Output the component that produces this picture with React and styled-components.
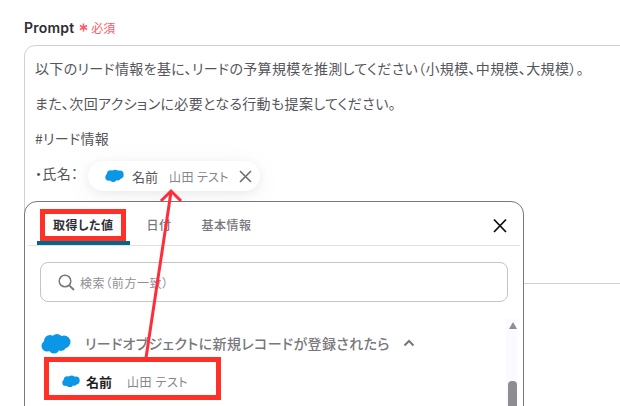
import styled, { createGlobalStyle } from 'styled-components';

const GlobalStyle = createGlobalStyle`
  html, body {
    margin: 0;
    padding: 0;
    background: #fff;
    overflow: hidden;
  }
  body {
    font-family: "Noto Sans CJK JP", "Noto Sans", sans-serif;
    font-feature-settings: "palt";
  }
`;

const Page = styled.div`
  position: relative;
  width: 620px;
  height: 406px;
  overflow: hidden;
  box-sizing: border-box;
  padding: 18px 0 0 24px;
`;

const LabelRow = styled.div`
  display: flex;
  align-items: center;
  height: 18px;
  margin-bottom: 9px;
`;

const Label = styled.span`
  font-family: Inter, "Noto Sans", sans-serif;
  font-size: 14px;
  font-weight: 600;
  color: #2d2d33;
  letter-spacing: 0.2px;
`;

const Asterisk = styled.svg`
  margin-left: 5px;
  width: 9px;
  height: 9px;
`;

const Required = styled.span`
  margin-left: 3px;
  font-size: 12px;
  color: #ff5a66;
`;

const PromptBox = styled.div`
  box-sizing: border-box;
  width: 640px;
  height: 239px;
  padding: 5px 10px;
  border: 1px solid #cfd0dc;
  border-radius: 11px;
  font-size: 14px;
  letter-spacing: 0.35px;
  color: #55555c;
`;

const PromptLine = styled.div`
  height: 35px;
  line-height: 35px;
  white-space: nowrap;
`;

const Chip = styled.div`
  position: absolute;
  left: 88px;
  top: 161px;
  width: 172px;
  height: 30px;
  box-sizing: border-box;
  padding-left: 17px;
  display: flex;
  align-items: center;
  border-radius: 15px;
  background: #fff;
  box-shadow: 0 2px 8px rgba(60, 60, 80, 0.08), 0 6px 30px rgba(60, 60, 80, 0.05);
`;

const ChipName = styled.span`
  margin-left: 8px;
  font-size: 13px;
  color: #55555c;
`;

const ChipValue = styled.span`
  margin-left: 11px;
  font-size: 12px;
  color: #85858c;
  letter-spacing: 0.4px;
`;

const ChipClose = styled.svg`
  margin-left: 10px;
  width: 13px;
  height: 13px;
`;

const Panel = styled.div`
  position: absolute;
  left: 24px;
  top: 201px;
  width: 500px;
  height: 240px;
  box-sizing: border-box;
  border: 1px solid #77777c;
  border-radius: 13px;
  background: #fff;
  padding: 0 3px;
`;

const TabBar = styled.div`
  display: flex;
  align-items: flex-end;
  height: 43px;
  border-bottom: 1px solid #e2e2e4;
  position: relative;
`;

const Tab = styled.div`
  box-sizing: border-box;
  height: 43px;
  line-height: 46px;
  padding: 0 ${({ $pad }) => $pad}px;
  font-size: 12px;
  font-weight: ${({ $active }) => ($active ? 700 : 500)};
  letter-spacing: 0.5px;
  color: ${({ $active }) => ($active ? '#2d2d33' : '#77777c')};
  border-bottom: 4px solid ${({ $active }) => ($active ? '#00688f' : 'transparent')};
  border-radius: 4px 4px 0 0;
  margin-left: ${({ $left }) => $left}px;
`;

const CloseIcon = styled.svg`
  position: absolute;
  right: 12px;
  top: 16px;
  width: 16px;
  height: 16px;
`;

const SearchBox = styled.div`
  box-sizing: border-box;
  margin: 16px 12px 0 12px;
  height: 40px;
  display: flex;
  align-items: center;
  padding-left: 17px;
  border: 1px solid #c4c4c8;
  border-radius: 8px;
`;

const SearchText = styled.span`
  margin-left: 5px;
  font-size: 12px;
  color: #8e8e94;
  letter-spacing: 0.6px;
`;

const ListArea = styled.div`
  position: relative;
  display: flex;
  margin-top: 17px;
  height: 120px;
`;

const List = styled.div`
  flex: 1;
  padding: 12px 0 0 13px;
`;

const GroupRow = styled.div`
  display: flex;
  align-items: center;
  height: 24px;
`;

const GroupTitle = styled.span`
  margin-left: 14px;
  font-size: 14px;
  font-weight: 500;
  letter-spacing: 0.4px;
  color: #77777c;
`;

const Chevron = styled.svg`
  margin-left: 13px;
  width: 12px;
  height: 8px;
`;

const ItemRow = styled.div`
  display: flex;
  align-items: center;
  height: 24px;
  margin: 14px 0 0 21px;
`;

const ItemName = styled.span`
  margin-left: 6px;
  font-size: 13px;
  font-weight: 700;
  color: #1e1e22;
`;

const ItemValue = styled.span`
  margin-left: 15px;
  font-size: 12px;
  color: #85858c;
  letter-spacing: 0.6px;
`;

const ScrollTrack = styled.div`
  width: 11px;
  margin-right: 3px;
  background: #fcfaff;
  display: flex;
  flex-direction: column;
  align-items: flex-end;
`;

const ScrollUp = styled.div`
  margin-top: 3px;
  width: 0;
  height: 0;
  border-left: 4.5px solid transparent;
  border-right: 4.5px solid transparent;
  border-bottom: 7px solid #8f8d92;
`;

const ScrollThumb = styled.div`
  margin-top: 52px;
  width: 9px;
  height: 60px;
  border-radius: 4px;
  background: #8f8d92;
`;

const Highlight = styled.div`
  position: absolute;
  left: ${({ $x }) => $x}px;
  top: ${({ $y }) => $y}px;
  width: ${({ $w }) => $w}px;
  height: ${({ $h }) => $h}px;
  box-sizing: border-box;
  border: 5px solid #ff3126;
`;

const ArrowLayer = styled.svg`
  position: absolute;
  left: 0;
  top: 0;
  width: 620px;
  height: 406px;
  pointer-events: none;
`;

function Cloud({ width }) {
  return (
    <svg width={width} viewBox="0 0 30 21" style={{ flexShrink: 0 }}>
      <g fill="#0b97e6">
        <circle cx="9" cy="8" r="6" />
        <circle cx="16" cy="6.5" r="5.5" />
        <circle cx="23" cy="9" r="6.5" />
        <circle cx="6" cy="13" r="5.5" />
        <circle cx="13" cy="15" r="5.5" />
        <circle cx="20" cy="13" r="5" />
      </g>
    </svg>
  );
}

export default function App() {
  return (
    <>
      <GlobalStyle />
      <Page>
        <LabelRow>
          <Label>Prompt</Label>
          <Asterisk viewBox="0 0 9 9">
            <path d="M4.500 0.500V8.500M1 2.500L8 6.500M8 2.500L1 6.500" stroke="#ff5a66" strokeWidth="1.500" fill="none" />
          </Asterisk>
          <Required>必須</Required>
        </LabelRow>
        <PromptBox>
          <PromptLine>以下のリード情報を基に、リードの予算規模を推測してください（小規模、中規模、大規模）。</PromptLine>
          <PromptLine>また、次回アクションに必要となる行動も提案してください。</PromptLine>
          <PromptLine>#リード情報</PromptLine>
          <PromptLine>・氏名：</PromptLine>
        </PromptBox>

        <Chip>
          <Cloud width={19} />
          <ChipName>名前</ChipName>
          <ChipValue>山田 テスト</ChipValue>
          <ChipClose viewBox="0 0 13 13">
            <path d="M1 1L12 12M12 1L1 12" stroke="#6e6e74" strokeWidth="1.6" fill="none" />
          </ChipClose>
        </Chip>

        <Panel>
          <TabBar>
            <Tab $active $pad={16} $left={9}>取得した値</Tab>
            <Tab $pad={0} $left={17}>日付</Tab>
            <Tab $pad={0} $left={30}>基本情報</Tab>
            <CloseIcon viewBox="0 0 16 16">
              <path d="M2 1.500L14 14M14 1.500L2 14" stroke="#111" strokeWidth="1.8" fill="none" />
            </CloseIcon>
          </TabBar>
          <SearchBox>
            <svg width="17" height="17" viewBox="0 0 17 17">
              <circle cx="7" cy="7" r="5.800" stroke="#77777c" strokeWidth="1.500" fill="none" />
              <path d="M11.300 11.300L16 16" stroke="#77777c" strokeWidth="1.800" fill="none" />
            </svg>
            <SearchText>検索（前方一致）</SearchText>
          </SearchBox>
          <ListArea>
            <List>
              <GroupRow>
                <Cloud width={30} />
                <GroupTitle>リードオブジェクトに新規レコードが登録されたら</GroupTitle>
                <Chevron viewBox="0 0 12 8">
                  <path d="M1.500 6.500L6 2L10.500 6.500" stroke="#77777c" strokeWidth="2" fill="none" />
                </Chevron>
              </GroupRow>
              <ItemRow>
                <Cloud width={18} />
                <ItemName>名前</ItemName>
                <ItemValue>山田 テスト</ItemValue>
              </ItemRow>
            </List>
            <ScrollTrack>
              <ScrollUp />
              <ScrollThumb />
            </ScrollTrack>
          </ListArea>
        </Panel>

        <Highlight $x={40} $y={209} $w={86} $h={32} />
        <Highlight $x={44} $y={357} $w={177} $h={43} />

        <ArrowLayer viewBox="0 0 620 406">
          <path d="M146 358L171 192M161 201L171 191L181 201" stroke="#ff2d3a" strokeWidth="3" fill="none" />
        </ArrowLayer>
      </Page>
    </>
  );
}
